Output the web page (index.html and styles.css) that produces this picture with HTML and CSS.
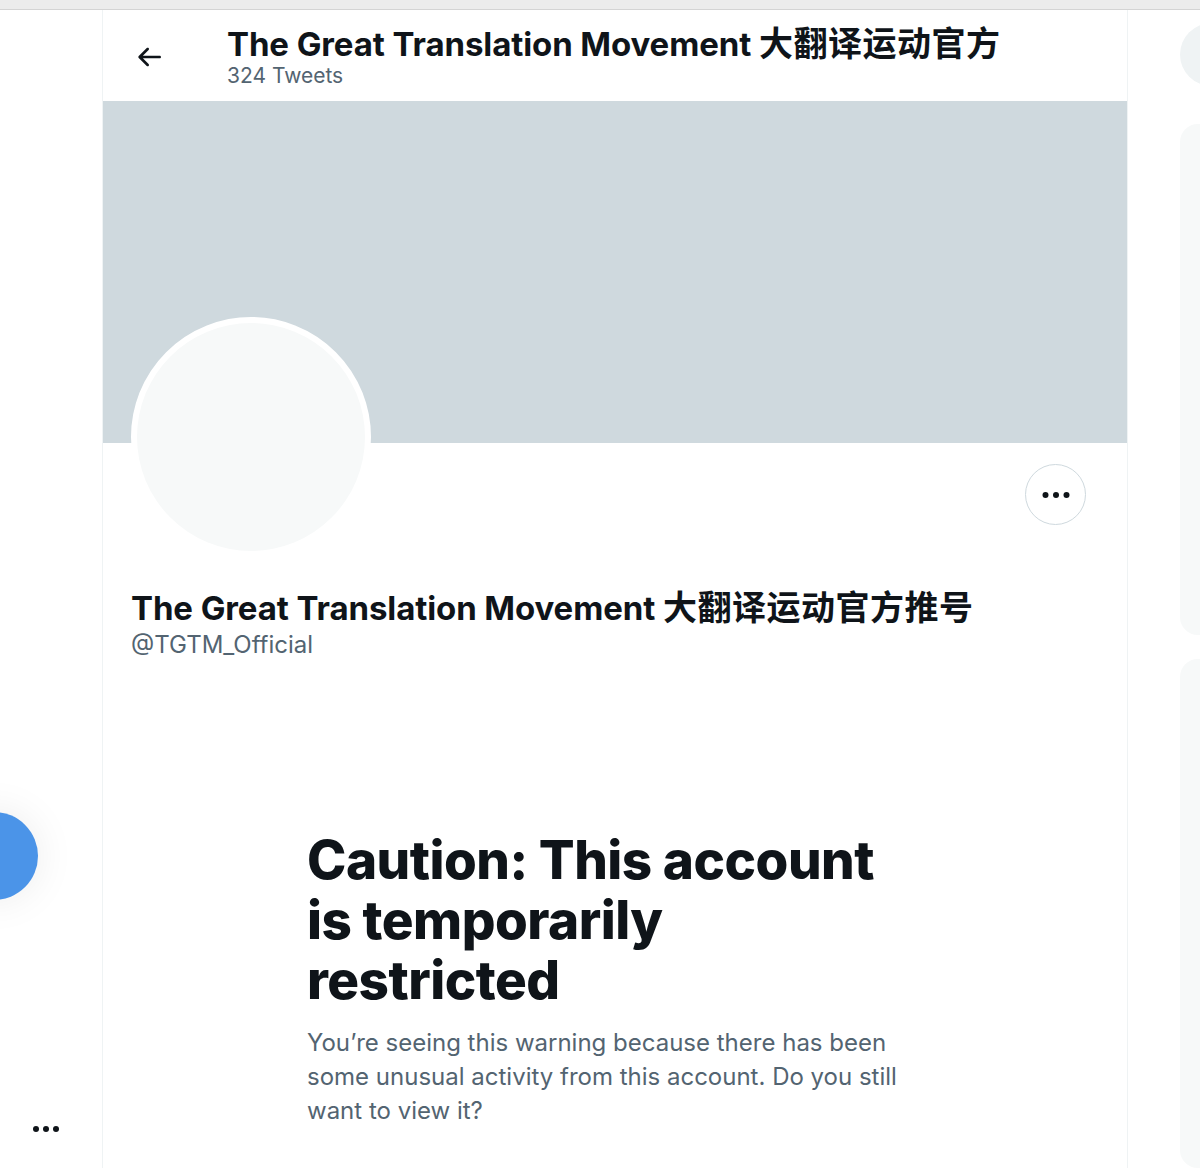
FILE: index.html
```html
<!DOCTYPE html>
<html lang="en">
  <head>
    <meta charset="UTF-8" />
    <meta name="viewport" content="width=device-width, initial-scale=1.0" />
    <title>The Great Translation Movement</title>
    <link rel="stylesheet" href="styles.css">
  </head>
  <body>
    <div class="browser-strip"></div>
    <div class="layout">
      <!-- Left nav -->
      <nav class="nav">
        <div class="tweet-fab"></div>
        <div class="nav-more">
          <span></span><span></span><span></span>
        </div>
      </nav>

      <!-- Profile column -->
      <main class="main">
        <header class="top-header">
          <button class="back-btn" aria-label="Back">
            <svg viewBox="0 0 24 24" width="32" height="32">
              <path d="M20 11H7.414l4.293-4.293c.39-.39.39-1.023 0-1.414s-1.023-.39-1.414 0l-6 6c-.39.39-.39 1.023 0 1.414l6 6c.195.195.45.293.707.293s.512-.098.707-.293c.39-.39.39-1.023 0-1.414L7.414 13H20c.553 0 1-.447 1-1s-.447-1-1-1z"></path>
            </svg>
          </button>
          <div class="header-text">
            <h2>The Great Translation Movement <span class="cjk">大翻译运动官方</span></h2>
            <div class="tweet-count">324 Tweets</div>
          </div>
        </header>

        <div class="banner"></div>

        <div class="profile">
          <div class="profile-row">
            <div class="avatar"><div class="avatar-inner"></div></div>
            <button class="more-btn" aria-label="More">
              <svg viewBox="0 0 24 24" width="36" height="36">
                <circle cx="5" cy="12" r="2"></circle>
                <circle cx="12" cy="12" r="2"></circle>
                <circle cx="19" cy="12" r="2"></circle>
              </svg>
            </button>
          </div>
          <div class="profile-name">The Great Translation Movement <span class="cjk">大翻译运动官方推号</span></div>
          <div class="profile-handle">@TGTM_Official</div>
        </div>

        <div class="caution">
          <h1>Caution: This account is temporarily restricted</h1>
          <p>You’re seeing this warning because there has been some unusual activity from this account. Do you still want to view it?</p>
        </div>
      </main>

      <!-- Right sidebar -->
      <aside class="aside">
        <div class="search-pill"></div>
        <div class="side-card card-one"></div>
        <div class="side-card card-two"></div>
      </aside>
    </div>
  </body>
</html>
```

FILE: styles.css
```css
body {
  margin: 0;
  font-family: Inter, "Noto Sans CJK SC", sans-serif;
  color: #0f1419;
  background-color: white;
  height: 1168px;
  overflow: hidden;
}
.browser-strip {
  height: 9px;
  background-color: #ececec;
  border-bottom: 1px solid #d4d4d4;
}
.layout {
  display: flex;
  height: 1158px;
}
.nav {
  width: 102px;
  flex-shrink: 0;
  display: flex;
  flex-direction: column;
  align-items: flex-start;
}
.tweet-fab {
  width: 88px;
  height: 88px;
  border-radius: 50%;
  background-color: #4b94e8;
  margin-top: 802px;
  margin-left: -50px;
  box-shadow: 0 0 40px rgba(0, 0, 0, 0.08);
}
.nav-more {
  display: flex;
  gap: 4px;
  margin-top: 226px;
  margin-left: 33px;
}
.nav-more span {
  width: 6px;
  height: 6px;
  border-radius: 50%;
  background-color: #0f1419;
}
.main {
  width: 1024px;
  flex-shrink: 0;
  border-left: 1px solid #eff3f4;
  border-right: 1px solid #eff3f4;
}
.top-header {
  height: 91px;
  display: flex;
  align-items: center;
}
.back-btn {
  background: none;
  border: none;
  padding: 0;
  margin-left: 30px;
  width: 32px;
  height: 32px;
  margin-top: 3px;
  cursor: pointer;
}
.back-btn svg {
  fill: #0f1419;
  display: block;
}
.header-text {
  margin-left: 62px;
  margin-top: 4px;
}
.header-text h2 {
  margin: 0;
  font-size: 33px;
  line-height: 36px;
  font-weight: 700;
  letter-spacing: -0.1px;
  white-space: nowrap;
}
.cjk {
  font-size: 34px;
  letter-spacing: 0.5px;
}
.tweet-count {
  font-size: 21px;
  line-height: 28px;
  color: #536471;
}
.banner {
  height: 342px;
  background-color: #cfd9de;
}
.profile {
  padding: 0 41px 0 28px;
}
.profile-row {
  display: flex;
  justify-content: space-between;
  align-items: flex-start;
}
.avatar {
  width: 228px;
  height: 228px;
  border: 6px solid white;
  border-radius: 50%;
  background-color: white;
  margin-top: -126px;
}
.avatar-inner {
  width: 100%;
  height: 100%;
  border-radius: 50%;
  background-color: #f7f9f9;
}
.more-btn {
  width: 61px;
  height: 61px;
  border: 1.5px solid #cfd9de;
  border-radius: 50%;
  background-color: white;
  margin-top: 21px;
  display: flex;
  align-items: center;
  justify-content: center;
  padding: 0;
  cursor: pointer;
}
.more-btn svg {
  fill: #0f1419;
}
.profile-name {
  margin-top: 31px;
  font-size: 33px;
  line-height: 40px;
  font-weight: 700;
  letter-spacing: -0.1px;
  white-space: nowrap;
}
.profile-handle {
  font-size: 24px;
  line-height: 34px;
  color: #536471;
}
.caution {
  width: 605px;
  margin: 168px 0 0 204px;
}
.caution h1 {
  margin: 0;
  font-size: 53px;
  line-height: 60px;
  font-weight: 800;
  letter-spacing: -0.5px;
}
.caution p {
  margin: 16px 0 0;
  font-size: 24px;
  line-height: 34px;
  color: #536471;
}
.aside {
  flex: 1;
  padding-left: 52px;
  display: flex;
  flex-direction: column;
  overflow: hidden;
}
.search-pill {
  width: 200px;
  height: 64px;
  border-radius: 32px;
  background-color: #eff3f4;
  margin-top: 13px;
}
.side-card {
  width: 300px;
  border-radius: 18px;
  background-color: #f7f9f9;
}
.card-one {
  height: 523px;
  margin-top: 38px;
}
.card-two {
  height: 520px;
  margin-top: 24px;
}
```
